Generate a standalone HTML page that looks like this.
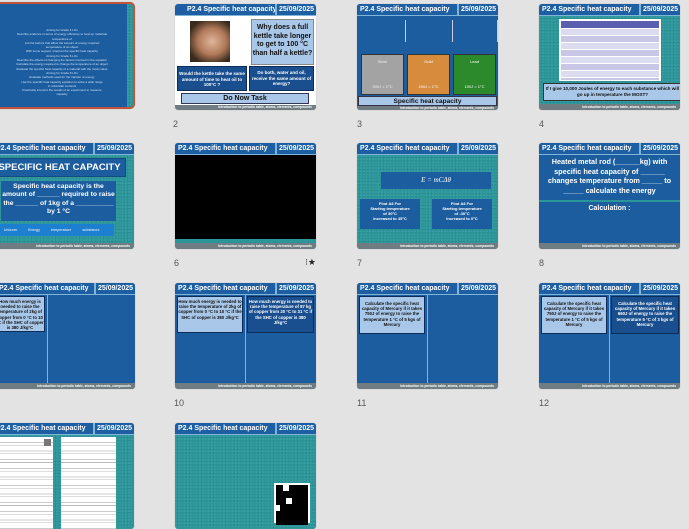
<!DOCTYPE html>
<html><head><meta charset="utf-8">
<style>
*{margin:0;padding:0;box-sizing:border-box}
body{width:689px;height:517px;background:#e3e3e3;position:relative;overflow:hidden;font-family:"Liberation Sans",sans-serif}
.s{position:absolute;width:141px;height:106px;border-radius:3px;overflow:hidden;background:#1c5d9f;box-shadow:0 0 1px #aaa}
.teal{background:#2a969a;background-image:radial-gradient(circle at 30% 40%,rgba(255,255,255,.08) 1px,transparent 1px),radial-gradient(circle at 70% 60%,rgba(0,0,0,.08) 1px,transparent 1px);background-size:3px 3px,4px 4px}
.h{position:absolute;left:0;top:0;width:100%;height:12px;background:#1d5fa2;border-bottom:1px solid #7fb6d8;color:#fff;font-weight:bold;font-size:7px;line-height:11px}
.h .t{position:absolute;left:3px;top:0}
.h .d{position:absolute;right:0;top:0;width:41px;height:11px;border-left:2px solid #7fb6d8;text-align:center}
.f{position:absolute;left:0;bottom:0;width:100%;height:6px;background:#6f7d82;color:#fff;font-size:3.3px;line-height:6px;text-align:right;padding-right:4px;font-weight:bold;white-space:nowrap}
.b{position:absolute;color:#fff;font-weight:bold;text-align:center}
.n{position:absolute;font-size:9px;color:#555}
.box{position:absolute;background:#a9c7e8;border:1px solid #0e2c55;color:#111;font-weight:bold;text-align:center;font-size:4.3px;line-height:5.2px;padding-top:2px}
.dbox{position:absolute;background:#1a4f8f;border:1px solid #0e2c55;color:#fff;font-weight:bold;text-align:center;font-size:4.3px;line-height:5.2px;padding-top:2px}
.vl{position:absolute;top:12px;bottom:6px;width:1px;background:#7fb6d8}
</style></head><body>

<!-- Slide 1 -->
<div class="s" style="left:-6px;top:2px;width:141px;height:107px;border:2px solid #c0533a;border-radius:5px;background:#1c5d9f">
 <div style="position:absolute;right:0;top:0;width:6px;height:100%" class="teal"></div>
 <div class="b" style="left:6px;top:24px;width:120px;font-size:3px;line-height:4.3px;font-weight:normal;color:#cfe0f5">Aiming for Grade 4 LOs<br>Describe evidence in terms of energy efficiency to heat up materials<br>temperature of<br>List the factors that affect the amount of energy required<br>temperature of an object<br>With some support, interpret the specific heat capacity<br>Aiming for Grade 6 LOs<br>Describe the effects of changing the factors involved in the equation<br>Calculate the energy required to change the temperature of an object<br>Evaluate the specific heat capacity of a material with the mean value<br>Aiming for Grade 8 LOs<br>Evaluate methods used for the transfer of energy<br>Use the specific heat capacity equation to solve a wide range<br>in unfamiliar contexts<br>Practically interpret the results of an experiment to measure<br>capacity</div>
</div>

<!-- Slide 2 -->
<div class="s" style="left:175px;top:4px;background:#fff">
 <div class="h"><span class="t" style="left:12px">P2.4 Specific heat capacity</span><span class="d">25/09/2025</span></div>
 <div style="position:absolute;left:15px;top:17px;width:40px;height:41px;background:radial-gradient(ellipse at 55% 50%,#e0b49a 0%,#b07a5a 45%,#3a2a1c 80%)"></div>
 <div class="box" style="left:76px;top:15px;width:63px;height:46px;font-size:7px;line-height:8.5px;padding-top:4px;border-color:#888">Why does a full kettle take longer to get to 100 °C than half a kettle?</div>
 <div class="dbox" style="left:2px;top:62px;width:70px;height:25px;font-size:4.5px;line-height:5.5px;padding-top:4px">Would the kettle take the same amount of time to heat oil to 100°C ?</div>
 <div class="dbox" style="left:74px;top:62px;width:65px;height:25px;font-size:4.5px;line-height:5.5px;padding-top:3px">Do both, water and oil, receive the same amount of energy?</div>
 <div class="box" style="left:6px;top:89px;width:128px;height:11px;font-size:7px;line-height:8px;padding-top:1px;border-color:#335">Do Now Task</div>
 <div class="f" style="height:5px;line-height:5px">Introduction to periodic table, atoms, elements, compounds</div>
</div>
<div class="n" style="left:173px;top:119px">2</div>

<!-- Slide 3 -->
<div class="s" style="left:357px;top:4px">
 <div class="h"><span class="t">P2.4 Specific heat capacity</span><span class="d">25/09/2025</span></div>
 <div style="position:absolute;left:48px;top:16px;width:1px;height:22px;background:#ccd"></div>
 <div style="position:absolute;left:95px;top:16px;width:1px;height:22px;background:#ccd"></div>
 <div style="position:absolute;left:140px;top:16px;width:1px;height:22px;background:#ccd"></div>
 <div style="position:absolute;left:4px;top:50px;width:43px;height:41px;background:#a3a3a3;border:1px solid #333;color:#eee;font-size:4px;text-align:center;padding-top:4px">Silver<br><br><br><br><br>500J = 1°C</div>
 <div style="position:absolute;left:50px;top:50px;width:43px;height:41px;background:#d68c3c;border:1px solid #333;color:#fff;font-size:4px;text-align:center;padding-top:4px">Gold<br><br><br><br><br>200J = 1°C</div>
 <div style="position:absolute;left:96px;top:50px;width:43px;height:41px;background:#2c8a2c;border:1px solid #333;color:#fff;font-size:4px;text-align:center;padding-top:4px">Lead<br><br><br><br><br>100J = 1°C</div>
 <div class="box" style="left:1px;top:92px;width:139px;height:10px;font-size:6.5px;line-height:7px;padding-top:1px;border-color:#334">Specific heat capacity</div>
 <div class="f" style="height:4px;line-height:4px">Introduction to periodic table, atoms, elements, compounds</div>
</div>
<div class="n" style="left:357px;top:119px">3</div>

<!-- Slide 4 -->
<div class="s teal" style="left:539px;top:4px">
 <div class="h"><span class="t">P2.4 Specific heat capacity</span><span class="d">25/09/2025</span></div>
 <div style="position:absolute;left:20px;top:15px;width:102px;height:62px;background:#fff;padding:2px">
  <div style="height:8px;background:#5a5fb0;border-bottom:1px solid #fff"></div>
  <div style="height:51px;background:repeating-linear-gradient(#dcdcf0 0 6px,#fff 6px 7px,#c8c8e6 7px 13px,#fff 13px 14px)"></div>
 </div>
 <div class="box" style="left:4px;top:79px;width:139px;height:18px;font-size:4.6px;line-height:5.5px;border-color:#333">If I give 10,000 Joules of energy to each substance which will go up in temperature the MOST?</div>
 <div class="f">Introduction to periodic table, atoms, elements, compounds</div>
</div>
<div class="n" style="left:539px;top:119px">4</div>

<!-- Slide 5 -->
<div class="s teal" style="left:-7px;top:143px">
 <div class="h"><span class="t">P2.4 Specific heat capacity</span><span class="d">25/09/2025</span></div>
 <div class="b" style="left:0;top:15px;width:133px;height:19px;background:#1c5d9f;border:1px solid #134a80;font-size:9.5px;line-height:17px">SPECIFIC HEAT CAPACITY</div>
 <div class="b" style="left:8px;top:38px;width:115px;height:40px;background:#1c5d9f;font-size:6.8px;line-height:8.3px;padding-top:2px">Specific heat capacity is the amount of ______ required to raise the ______ of 1kg of a __________ by 1 °C</div>
 <div style="position:absolute;left:5px;top:81px;width:116px;height:12px;background:#1c7fd0;color:#cde;font-size:3.5px;font-weight:bold;line-height:12px;word-spacing:10px;padding-left:6px">Unicorn Energy temperature substance</div>
 <div class="f">Introduction to periodic table, atoms, elements, compounds</div>
</div>

<!-- Slide 6 -->
<div class="s" style="left:175px;top:143px;background:#2a969a">
 <div class="h"><span class="t">P2.4 Specific heat capacity</span><span class="d">25/09/2025</span></div>
 <div style="position:absolute;left:0;top:12px;width:141px;height:84px;background:#000"></div>
 <div class="f">Introduction to periodic table, atoms, elements, compounds</div>
</div>
<div class="n" style="left:174px;top:258px">6</div>
<div class="n" style="left:305px;top:257px;font-size:9px;color:#222">⁝★</div>

<!-- Slide 7 -->
<div class="s teal" style="left:357px;top:143px">
 <div class="h"><span class="t">P2.4 Specific heat capacity</span><span class="d">25/09/2025</span></div>
 <div style="position:absolute;left:24px;top:29px;width:110px;height:17px;background:#1c5d9f;color:#fff;font-family:'Liberation Serif',serif;font-style:italic;font-size:7px;text-align:center;line-height:17px">E = mCΔθ</div>
 <div class="b" style="left:3px;top:56px;width:60px;height:30px;background:#1c5d9f;font-size:4px;line-height:5px;padding-top:2px">Find Δθ For<br>Starting temperature<br>of 30°C<br>Increased to 45°C</div>
 <div class="b" style="left:75px;top:56px;width:60px;height:30px;background:#1c5d9f;font-size:4px;line-height:5px;padding-top:2px">Find Δθ For<br>Starting temperature<br>of -30°C<br>Increased to 0°C</div>
 <div class="f">Introduction to periodic table, atoms, elements, compounds</div>
</div>
<div class="n" style="left:357px;top:258px">7</div>

<!-- Slide 8 -->
<div class="s" style="left:539px;top:143px">
 <div class="h"><span class="t">P2.4 Specific heat capacity</span><span class="d">25/09/2025</span></div>
 <div class="b" style="left:2px;top:14px;width:137px;font-size:7.3px;line-height:9.5px">Heated metal rod (______kg) with specific heat capacity of ______ changes temperature from _____ to _____ calculate the energy</div>
 <div style="position:absolute;left:0;top:57px;width:141px;height:2px;background:#2a969a"></div>
 <div class="b" style="left:0;top:62px;width:141px;font-size:7px">Calculation :</div>
 <div class="f">Introduction to periodic table, atoms, elements, compounds</div>
</div>
<div class="n" style="left:539px;top:258px">8</div>

<!-- Slide 9 -->
<div class="s" style="left:-35px;top:283px;width:170px">
 <div class="h"><span class="t" style="left:34px">P2.4 Specific heat capacity</span><span class="d">25/09/2025</span></div>
 <div class="vl" style="left:82px"></div>
 <div class="box" style="left:30px;top:13px;width:50px;height:36px">How much energy is needed to raise the temperature of 2kg of copper from 0 °C to 10 °C if the SHC of copper is 380 J/kg°C</div>
 <div class="f">Introduction to periodic table, atoms, elements, compounds</div>
</div>

<!-- Slide 10 -->
<div class="s" style="left:175px;top:283px">
 <div class="h"><span class="t">P2.4 Specific heat capacity</span><span class="d">25/09/2025</span></div>
 <div class="vl" style="left:70px"></div>
 <div class="box" style="left:2px;top:13px;width:66px;height:37px">How much energy is needed to raise the temperature of 2kg of copper from 0 °C to 10 °C if the SHC of copper is 380 J/kg°C</div>
 <div class="dbox" style="left:72px;top:13px;width:67px;height:37px">How much energy is needed to raise the temperature of 87 kg of copper from 20 °C to 31 °C if the SHC of copper is 380 J/kg°C</div>
 <div class="f">Introduction to periodic table, atoms, elements, compounds</div>
</div>
<div class="n" style="left:174px;top:398px">10</div>

<!-- Slide 11 -->
<div class="s" style="left:357px;top:283px">
 <div class="h"><span class="t">P2.4 Specific heat capacity</span><span class="d">25/09/2025</span></div>
 <div class="vl" style="left:70px"></div>
 <div class="box" style="left:2px;top:13px;width:66px;height:38px;padding-top:4px">Calculate the specific heat capacity of Mercury if it takes 750J of energy to raise the temperature 1 °C of 5 kgs of Mercury</div>
 <div class="f">Introduction to periodic table, atoms, elements, compounds</div>
</div>
<div class="n" style="left:357px;top:398px">11</div>

<!-- Slide 12 -->
<div class="s" style="left:539px;top:283px">
 <div class="h"><span class="t">P2.4 Specific heat capacity</span><span class="d">25/09/2025</span></div>
 <div class="vl" style="left:70px"></div>
 <div class="box" style="left:2px;top:13px;width:66px;height:38px;padding-top:4px">Calculate the specific heat capacity of Mercury if it takes 750J of energy to raise the temperature 1 °C of 5 kgs of Mercury</div>
 <div class="dbox" style="left:72px;top:13px;width:68px;height:38px;padding-top:4px">Calculate the specific heat capacity of Mercury if it takes 660J of energy to raise the temperature 5 °C of 3 kgs of Mercury</div>
 <div class="f">Introduction to periodic table, atoms, elements, compounds</div>
</div>
<div class="n" style="left:539px;top:398px">12</div>

<!-- Slide 13 -->
<div class="s teal" style="left:-7px;top:423px">
 <div class="h"><span class="t">P2.4 Specific heat capacity</span><span class="d">25/09/2025</span></div>
 <div style="position:absolute;left:5px;top:14px;width:55px;height:95px;background:#fff;background-image:repeating-linear-gradient(#fff 0 5px,#ccc 5px 6px,#fff 6px 8px,#bbb 8px 8.6px)"></div>
 <div style="position:absolute;left:51px;top:16px;width:7px;height:7px;background:#777"></div>
 <div style="position:absolute;left:68px;top:14px;width:55px;height:95px;background:#fff;background-image:repeating-linear-gradient(#fff 0 5px,#ccc 5px 6px,#fff 6px 8px,#bbb 8px 8.6px)"></div>
</div>

<!-- Slide 14 -->
<div class="s teal" style="left:175px;top:423px">
 <div class="h"><span class="t">P2.4 Specific heat capacity</span><span class="d">25/09/2025</span></div>
 <div style="position:absolute;left:99px;top:60px;width:36px;height:40px;background:#fff"></div>
 <div style="position:absolute;left:101px;top:62px;width:32px;height:40px;background:#000"></div>
 <div style="position:absolute;left:108px;top:62px;width:6px;height:6px;background:#fff"></div>
 <div style="position:absolute;left:111px;top:75px;width:6px;height:6px;background:#fff"></div>
 <div style="position:absolute;left:101px;top:82px;width:4px;height:6px;background:#fff"></div>
</div>

</body></html>
